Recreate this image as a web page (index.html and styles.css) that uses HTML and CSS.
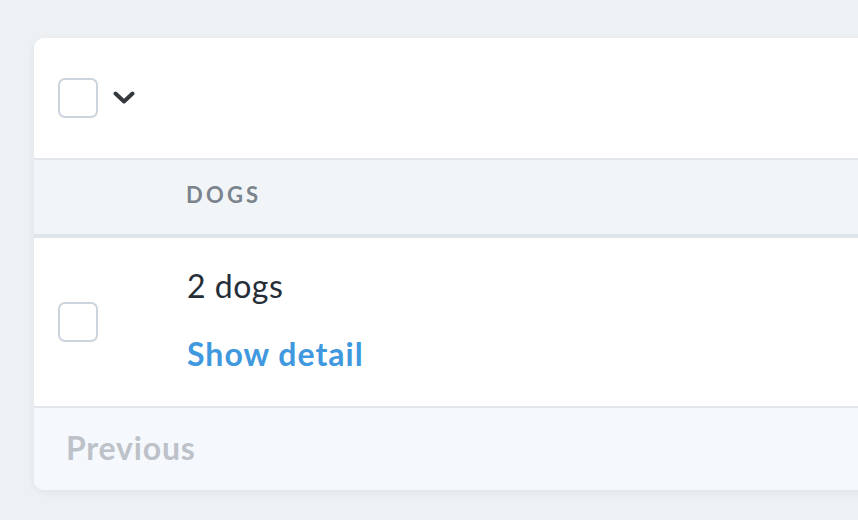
FILE: index.html
```html
<!DOCTYPE html>
<html>
<head>
<meta charset="utf-8">
<link rel="stylesheet" href="styles.css">
</head>
<body>
<div class="card">
  <div class="toolbar">
    <span class="checkbox"></span>
    <svg class="chevron" width="22" height="13" viewBox="0 0 22 13"><path d="M2.5 2.5 L11 10.5 L19.5 2.5" fill="none" stroke="#35393e" stroke-width="4" stroke-linecap="round" stroke-linejoin="round"/></svg>
  </div>
  <div class="thead">
    <div class="col-check"></div>
    <div class="col-main th">Dogs</div>
  </div>
  <div class="row">
    <div class="col-check"><span class="checkbox"></span></div>
    <div class="col-main cell">
      <div class="value">2 dogs</div>
      <a class="link">Show detail</a>
    </div>
  </div>
  <div class="footer">
    <span class="prev">Previous</span>
  </div>
</div>
</body>
</html>
```

FILE: styles.css
```css
html, body {
  margin: 0;
  padding: 0;
}
body {
  background: #eef1f4;
  font-family: "Lato", "Noto Sans", sans-serif;
  width: 858px;
  height: 520px;
  overflow: hidden;
}
.card {
  margin: 38px 0 0 34px;
  width: 900px;
  background: #fff;
  border-radius: 10px;
  box-shadow: 0 2px 8px rgba(0, 0, 0, 0.06);
  overflow: hidden;
}
.toolbar {
  height: 120px;
  display: flex;
  align-items: center;
  padding-left: 24px;
  border-bottom: 2px solid #e3e7eb;
}
.checkbox {
  display: block;
  width: 40px;
  height: 40px;
  box-sizing: border-box;
  border: 2px solid #ccd5de;
  border-radius: 7px;
  background: #fff;
}
.chevron {
  margin-left: 15px;
  margin-top: -1px;
}
.thead {
  display: flex;
  height: 74px;
  background: #f2f5f8;
  border-bottom: 4px solid #e0e5e9;
  align-items: center;
}
.col-check {
  width: 153px;
  padding-left: 24px;
  box-sizing: border-box;
  flex: none;
}
.th {
  font-size: 22px;
  font-weight: 700;
  color: #7b848d;
  text-transform: uppercase;
  letter-spacing: 3.2px;
  margin-top: -6px;
  margin-left: -1px;
}
.row {
  display: flex;
  height: 168px;
  align-items: center;
  border-bottom: 2px solid #e3e7eb;
}
.cell {
  display: flex;
  flex-direction: column;
  gap: 32px;
  margin-top: -4px;
}
.value {
  font-size: 32px;
  color: #252d37;
  line-height: 36px;
  letter-spacing: 0.5px;
}
.link {
  font-size: 32px;
  font-weight: 700;
  color: #4099de;
  line-height: 36px;
  letter-spacing: 1px;
}
.footer {
  height: 82px;
  background: #f5f9fd;
  display: flex;
  align-items: center;
  padding-left: 32px;
}
.prev {
  font-size: 32px;
  font-weight: 700;
  color: #bdc2c9;
  line-height: 36px;
  letter-spacing: 0.8px;
  margin-top: -3px;
}
```
